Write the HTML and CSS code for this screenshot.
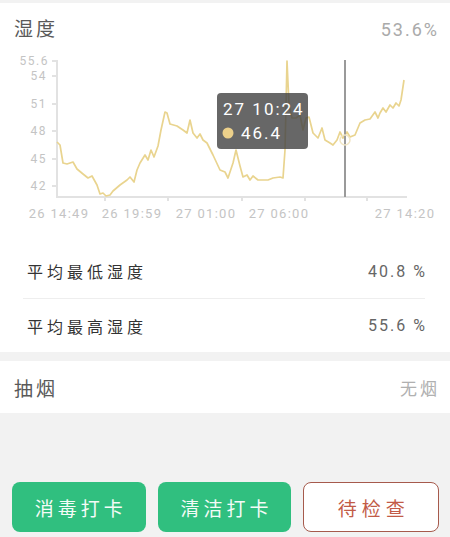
FILE: index.html
```html
<!DOCTYPE html>
<html lang="zh-CN">
<head>
    <meta charset="UTF-8">
    <meta name="viewport" content="width=device-width, initial-scale=1.0">
    <title>湿度</title>
    <link rel="stylesheet" href="styles.css">
</head>
<body>
    <div class="page">
        <section class="card">
            <div class="card-head">
                <span class="card-title">湿度</span>
                <span class="card-value">53.6%</span>
            </div>
            <svg class="chart" viewBox="0 52 450 170" width="450" height="170">
                <g class="axis">
                    <line x1="57" y1="60" x2="57" y2="197"></line>
                    <line x1="56" y1="197" x2="407" y2="197"></line>
                    <line x1="52" y1="61" x2="57" y2="61"></line>
                    <line x1="52" y1="76" x2="57" y2="76"></line>
                    <line x1="52" y1="104" x2="57" y2="104"></line>
                    <line x1="52" y1="131" x2="57" y2="131"></line>
                    <line x1="52" y1="159" x2="57" y2="159"></line>
                    <line x1="52" y1="186" x2="57" y2="186"></line>
                    <line x1="105" y1="197" x2="105" y2="201"></line>
                    <line x1="168" y1="197" x2="168" y2="201"></line>
                    <line x1="242" y1="197" x2="242" y2="201"></line>
                    <line x1="305" y1="197" x2="305" y2="201"></line>
                    <line x1="367" y1="197" x2="367" y2="201"></line>
                </g>
                <g class="y-labels">
                    <text x="49" y="65">55.6</text>
                    <text x="47" y="80">54</text>
                    <text x="47" y="108">51</text>
                    <text x="47" y="135">48</text>
                    <text x="47" y="163">45</text>
                    <text x="47" y="190">42</text>
                </g>
                <g class="x-labels">
                    <text x="59" y="218">26 14:49</text>
                    <text x="132" y="218">26 19:59</text>
                    <text x="206" y="218">27 01:00</text>
                    <text x="279" y="218">27 06:00</text>
                    <text x="405" y="218">27 14:20</text>
                </g>
                <polyline class="series" points="57,142 60,145 63,163 67,164 70,163 73,162 77,169 83,174 88,178 92,176 97,185 100,194 103,193 106,196 110,195 113,191 120,185 127,180 130,177 134,182 137,170 140,163 145,155 148,160 151,150 154,157 158,146 161,130 165,112 167,113 170,124 177,126 183,130 187,133 190,120 193,133 197,138 200,134 203,140 207,143 213,155 220,170 225,172 228,178 233,163 236,150 240,166 243,177 247,175 250,180 253,176 258,180 268,180 273,178 280,177 283,178 285,150 287,61 289,105 292,118 296,118 300,115 303,130 306,118 309,117 313,133 318,138 322,128 325,140 330,143 333,145 337,140 340,132 343,138 347,132 350,137 355,135 360,123 365,120 370,119 375,112 378,118 380,113 383,108 386,112 390,105 393,108 396,103 399,106 401,100 404,80"></polyline>
                <line class="cursor" x1="345" y1="60" x2="345" y2="197"></line>
                <circle class="focus" cx="345" cy="140" r="5"></circle>
                <g class="tip">
                    <rect x="217" y="93" width="91" height="56" rx="4"></rect>
                    <text x="223" y="115">27 10:24</text>
                    <circle cx="228" cy="133" r="5.5"></circle>
                    <text x="241" y="139">46.4</text>
                </g>
            </svg>
            <div class="stats">
                <div class="stat-row">
                    <span class="stat-label">平均最低湿度</span>
                    <span class="stat-value">40.8 %</span>
                </div>
                <div class="stat-row">
                    <span class="stat-label">平均最高湿度</span>
                    <span class="stat-value">55.6 %</span>
                </div>
            </div>
        </section>
        <section class="smoke">
            <span class="card-title">抽烟</span>
            <span class="smoke-value">无烟</span>
        </section>
        <div class="actions">
            <button class="btn btn-green">消毒打卡</button>
            <button class="btn btn-green">清洁打卡</button>
            <button class="btn btn-outline">待检查</button>
        </div>
    </div>
</body>
</html>
```

FILE: styles.css
```css
body {
    margin: 0;
    background-color: #f2f2f2;
    font-family: Roboto, "Noto Sans CJK SC", sans-serif;
}
.page {
    display: flex;
    flex-direction: column;
    min-height: 100vh;
    padding-top: 3px;
    box-sizing: border-box;
}
.card {
    background-color: #fff;
}
.card-head {
    display: flex;
    justify-content: space-between;
    align-items: center;
    padding: 14px 11px 9px 14px;
    line-height: 26px;
}
.card-title {
    font-size: 19px;
    letter-spacing: 3px;
    color: #595959;
}
.card-value {
    font-size: 18px;
    letter-spacing: 2px;
    color: #aaa;
}
.chart {
    display: block;
}
.axis line {
    stroke: #e2e2e2;
    stroke-width: 2;
}
.y-labels text {
    font-size: 12px;
    letter-spacing: 1.5px;
    fill: #c4c4c4;
    text-anchor: end;
}
.x-labels text {
    font-size: 13px;
    letter-spacing: 1.3px;
    fill: #c4c4c4;
    text-anchor: middle;
}
.series {
    fill: none;
    stroke: #e9d48f;
    stroke-width: 1.7;
    stroke-linejoin: round;
}
.cursor {
    stroke: #9a9a9a;
    stroke-width: 2;
}
.focus {
    fill: none;
    stroke: #f1e6c4;
    stroke-width: 1.5;
}
.tip rect {
    fill: rgba(70, 70, 70, 0.82);
}
.tip text {
    font-size: 17px;
    letter-spacing: 2px;
    fill: #fff;
}
.tip circle {
    fill: #ecd08a;
}
.stats {
    margin: 22px 25px 0 23px;
}
.stat-row {
    display: flex;
    justify-content: space-between;
    align-items: center;
    height: 54px;
    padding-left: 4px;
    box-sizing: border-box;
}
.stat-row + .stat-row {
    border-top: 1px solid #eee;
}
.stat-label {
    font-size: 16px;
    letter-spacing: 4px;
    color: #333;
}
.stat-value {
    font-size: 16px;
    letter-spacing: 2px;
    color: #666;
    margin-right: -2px;
}
.smoke {
    display: flex;
    justify-content: space-between;
    align-items: center;
    height: 52px;
    margin-top: 9px;
    padding: 0 10px 0 14px;
    background-color: #fff;
}
.smoke-value {
    font-size: 17px;
    letter-spacing: 3px;
    color: #b0b0b0;
}
.actions {
    display: flex;
    gap: 12px;
    margin-top: auto;
    padding: 0 11px 5px 12px;
}
.btn {
    flex: 1;
    height: 50px;
    border-radius: 8px;
    font-family: Roboto, "Noto Sans CJK SC", sans-serif;
    font-size: 19px;
    letter-spacing: 4px;
    text-indent: 4px;
    box-sizing: border-box;
}
.btn-green {
    background-color: #30bf7f;
    border: none;
    color: #f4fbf7;
}
.btn-outline {
    background-color: #fff;
    border: 1.5px solid #a65a4c;
    color: #c25b47;
    letter-spacing: 5px;
    text-indent: 5px;
}
```
